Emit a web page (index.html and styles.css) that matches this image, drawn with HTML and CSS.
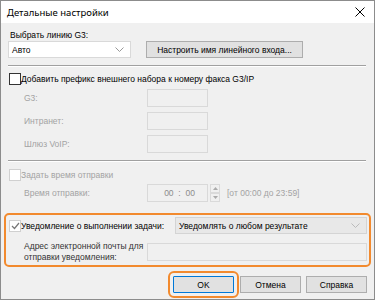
FILE: index.html
```html
<!DOCTYPE html>
<html lang="ru">

<head>
    <meta charset="utf-8">
    <meta name="viewport" content="width=device-width, initial-scale=1.0">
    <title>Детальные настройки</title>
    <link rel="stylesheet" href="styles.css">
</head>

<body>
    <div class="window">
        <div class="titlebar">
            <span class="title">Детальные настройки</span>
            <span class="close">
                <svg width="10" height="10" viewBox="0 0 10 10"><path d="M0.5 0.5 L9.5 9.5 M9.5 0.5 L0.5 9.5" stroke="#000" stroke-width="1" fill="none"/></svg>
            </span>
        </div>

        <div class="content">
            <div class="label-top">Выбрать линию G3:</div>
            <div class="row line-row">
                <div class="combo">
                    <span>Авто</span>
                    <svg class="chev" width="9" height="5" viewBox="0 0 9 5"><path d="M0.5 0.5 L4.5 4.5 L8.5 0.5" stroke="#999" fill="none"/></svg>
                </div>
                <button class="btn btn-wide">Настроить имя линейного входа...</button>
            </div>

            <div class="sep sep-1"></div>

            <label class="check-row prefix-row">
                <span class="box"></span>
                <span>Добавить префикс внешнего набора к номеру факса G3/IP</span>
            </label>

            <div class="field-list">
                <div class="field">
                    <span class="flabel off">G3:</span>
                    <span class="input off-input"></span>
                </div>
                <div class="field">
                    <span class="flabel off">Интранет:</span>
                    <span class="input off-input"></span>
                </div>
                <div class="field">
                    <span class="flabel off">Шлюз VoIP:</span>
                    <span class="input off-input"></span>
                </div>
            </div>

            <div class="sep sep-2"></div>

            <label class="check-row time-check off">
                <span class="box box-off"></span>
                <span>Задать время отправки</span>
            </label>

            <div class="field time-row">
                <span class="flabel off">Время отправки:</span>
                <span class="input off-input time-input">00&nbsp;&nbsp;:&nbsp;&nbsp;00</span>
                <span class="spin">
                    <span class="spin-btn"><svg width="5" height="3" viewBox="0 0 5 3"><path d="M0 3 L2.5 0 L5 3 Z" fill="#aaa"/></svg></span>
                    <span class="spin-btn"><svg width="5" height="3" viewBox="0 0 5 3"><path d="M0 0 L2.5 3 L5 0 Z" fill="#aaa"/></svg></span>
                </span>
                <span class="range off">[от 00:00 до 23:59]</span>
            </div>

            <div class="notify">
                <div class="notify-row">
                    <label class="check-row notify-check">
                        <span class="box box-off checked">
                            <svg width="9" height="8" viewBox="0 0 9 8"><path d="M1 4 L3.5 6.5 L8 1" stroke="#777" stroke-width="1.2" fill="none"/></svg>
                        </span>
                        <span>Уведомление о выполнении задачи:</span>
                    </label>
                    <div class="combo combo-off">
                        <span>Уведомлять о любом результате</span>
                        <svg class="chev" width="9" height="5" viewBox="0 0 9 5"><path d="M0.5 0.5 L4.5 4.5 L8.5 0.5" stroke="#bbb" fill="none"/></svg>
                    </div>
                </div>
                <div class="field mail-row">
                    <span class="flabel mail-label">Адрес электронной почты для<br>отправки уведомления:</span>
                    <span class="input off-input mail-input"></span>
                </div>
            </div>

            <div class="buttons">
                <button class="btn btn-ok">OK</button>
                <button class="btn">Отмена</button>
                <button class="btn">Справка</button>
            </div>
        </div>
    </div>
</body></html>
```

FILE: styles.css
```css
* {
    box-sizing: border-box;
}

body {
    margin: 0;
    font-family: "Liberation Sans", Arial, sans-serif;
    font-size: 8.5px;
    color: #000;
}

.window {
    width: 375px;
    height: 300px;
    border: 1px solid #8c8c8c;
    background: #f0f0f0;
    overflow: hidden;
}

.titlebar {
    height: 22px;
    background: #fff;
    display: flex;
    align-items: center;
    justify-content: space-between;
    padding: 0 9px 0 6px;
    font-family: "Noto Sans", sans-serif;
    font-size: 9.5px;
}

.close {
    display: flex;
}

.content {
    padding: 6px 7px 0 7px;
}

.label-top {
    height: 12px;
    line-height: 12px;
    padding-left: 2px;
}

.row {
    display: flex;
    align-items: center;
}

.line-row {
    gap: 15px;
}

.combo {
    height: 17px;
    width: 123px;
    background: #fff;
    border: 1px solid #d9d9d9;
    display: flex;
    align-items: center;
    justify-content: space-between;
    padding: 0 6px 0 3px;
    white-space: nowrap;
}

.btn {
    font: inherit;
    height: 17px;
    width: 61px;
    background: #e1e1e1;
    border: 1px solid #adadad;
    padding: 0;
    color: #000;
    white-space: nowrap;
}

.btn-wide {
    width: 157px;
}

.sep {
    border-top: 1px solid #a0a0a0;
    border-bottom: 1px solid #fff;
    margin-right: 1px;
}

.sep-1 {
    margin-top: 7px;
}

.sep-2 {
    margin-top: 7px;
}

.check-row {
    display: flex;
    align-items: center;
    height: 12px;
    padding-left: 1px;
    white-space: nowrap;
}

.box {
    width: 12px;
    height: 12px;
    background: #fff;
    border: 1px solid #333;
    display: flex;
    align-items: center;
    justify-content: center;
    flex: none;
}

.box-off {
    border-color: #d0d0d0;
}

.prefix-row {
    margin-top: 6px;
}

.off {
    color: #a3a3a3;
}

.field-list {
    margin-top: 4px;
    display: flex;
    flex-direction: column;
    gap: 5px;
}

.field {
    display: flex;
    align-items: center;
}

.flabel {
    width: 139px;
    flex: none;
    padding-left: 16px;
}

.input {
    height: 18px;
    width: 61px;
}

.off-input {
    background: #f0f0f0;
    border: 1px solid #d9d9d9;
}

.time-check {
    margin-top: 7px;
}

.time-row {
    margin-top: 3px;
}

.time-input {
    display: flex;
    align-items: center;
    justify-content: center;
    color: #8c8c8c;
    padding-left: 4px;
}

.spin {
    display: flex;
    flex-direction: column;
    margin-left: 2px;
    height: 18px;
}

.spin-btn {
    width: 10px;
    height: 9px;
    background: #f0f0f0;
    border: 1px solid #dadada;
    display: flex;
    align-items: center;
    justify-content: center;
}

.range {
    margin-left: 7px;
}

.notify {
    margin: 11px -4px 0 -4px;
    border: 2px solid #f28a2e;
    border-radius: 5px;
    padding: 2px 2px 2px 3px;
}

.notify-row {
    display: flex;
    align-items: center;
    justify-content: space-between;
}

.notify-check {
    padding-left: 0;
}

.combo-off {
    width: 192px;
    background: #e8e8e8;
    border-color: #d4d4d4;
}

.mail-row {
    margin-top: 7px;
}

.mail-label {
    width: 138px;
    line-height: 11px;
    padding-left: 15px;
    color: #333;
    white-space: nowrap;
}

.mail-input {
    flex: 1;
    height: 18px;
}

.buttons {
    display: flex;
    justify-content: flex-end;
    gap: 5px;
    margin-top: 9px;
}

.btn-ok {
    border-color: #0078d7;
    outline: 2px solid #f28a2e;
    outline-offset: 3px;
    border-radius: 1px;
    margin-right: 1px;
}
```
